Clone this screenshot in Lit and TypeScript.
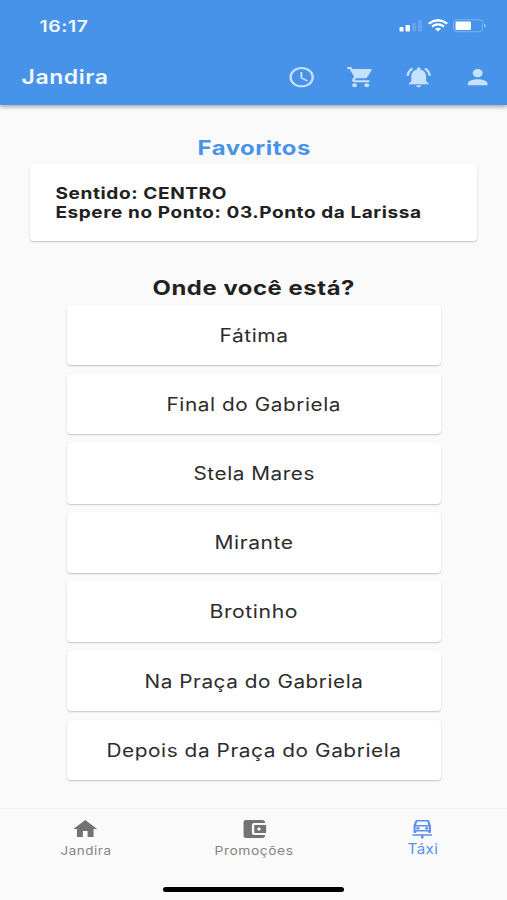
import { LitElement, html, css, svg } from "lit";
import { customElement, property } from "lit/decorators.js";

/** One line of text, set to a given advance width. */
@customElement("wide-text")
class WideText extends LitElement {
  @property() text = "";
  @property({ type: Number }) width = 100;
  @property({ type: Number }) size = 16;
  @property({ type: Number }) weight = 400;

  static styles = css`
    :host { display: block; flex: none; }
    .line { display: block; overflow: visible; font-family: Inter, "Liberation Sans", sans-serif; letter-spacing: 0.03em; fill: currentColor; }
  `;

  render() {
    return html`<svg class="line" width=${this.width} height="20">
      <text x="0.5" y="15" font-size=${this.size} font-weight=${this.weight}
        textLength=${this.width} lengthAdjust="spacingAndGlyphs">${this.text}</text>
    </svg>`;
  }
}

const icons: Record<string, unknown> = {
  clock: svg`<path d="M11.99 2C6.47 2 2 6.48 2 12s4.47 10 9.99 10C17.52 22 22 17.52 22 12S17.52 2 11.99 2zM12 20c-4.42 0-8-3.58-8-8s3.58-8 8-8 8 3.58 8 8-3.58 8-8 8zm.5-13H11v6l5.25 3.15.75-1.23-4.5-2.67z"/>`,
  cart: svg`<path d="M7 18c-1.1 0-1.99.9-1.99 2S5.9 22 7 22s2-.9 2-2-.9-2-2-2zM1 2v2h2l3.6 7.59-1.35 2.45c-.16.28-.25.61-.25.96 0 1.1.9 2 2 2h12v-2H7.42c-.14 0-.25-.11-.25-.25l.03-.12.9-1.63h7.45c.75 0 1.41-.41 1.75-1.03l3.58-6.49c.08-.14.12-.31.12-.48 0-.55-.45-1-1-1H5.21l-.94-2H1zm16 16c-1.1 0-1.99.9-1.99 2s.89 2 1.99 2 2-.9 2-2-.9-2-2-2z"/>`,
  bell: svg`<path d="M7.58 4.08L6.15 2.65C3.75 4.48 2.17 7.3 2.03 10.5h2c.15-2.65 1.51-4.97 3.55-6.42zm12.39 6.42h2c-.15-3.2-1.73-6.02-4.12-7.85l-1.42 1.43c2.02 1.45 3.39 3.77 3.54 6.42zM18 11c0-3.07-1.64-5.64-4.5-6.32V4c0-.83-.67-1.5-1.5-1.5s-1.5.67-1.5 1.5v.68C7.63 5.36 6 7.92 6 11v5l-2 2v1h16v-1l-2-2v-5zm-6 11c.14 0 .27-.01.4-.04.65-.14 1.18-.58 1.44-1.18.1-.24.15-.5.15-.78h-4c.01 1.1.9 2 2.01 2z"/>`,
  person: svg`<path d="M12 12c2.21 0 4-1.79 4-4s-1.79-4-4-4-4 1.79-4 4 1.79 4 4 4zm0 2c-2.67 0-8 1.34-8 4v2h16v-2c0-2.66-5.33-4-8-4z"/>`,
  home: svg`<path d="M10 20v-6h4v6h5v-8h3L12 3 2 12h3v8z"/>`,
  wallet: svg`<path d="M21 18v1c0 1.1-.9 2-2 2H5c-1.11 0-2-.9-2-2V5c0-1.1.89-2 2-2h14c1.1 0 2 .9 2 2v1h-9c-1.11 0-2 .9-2 2v8c0 1.1.89 2 2 2h9zm-9-2h10V8H12v8zm4-2.500c-.83 0-1.500-.67-1.500-1.500s.67-1.500 1.500-1.500 1.500.67 1.500 1.500-.67 1.500-1.500 1.500z"/>`,
  taxi: svg`<path fill-rule="evenodd" d="M17.900 4C17.700 3.300 17.200 2.900 16.500 2.900H7.500C6.800 2.900 6.300 3.300 6.100 4L4.700 8.600V15.200C4.700 15.700 5 16 5.500 16H6.200C6.700 16 7 15.700 7 15.200V14.600H17V15.200C17 15.700 17.300 16 17.800 16H18.500C19 16 19.300 15.700 19.300 15.200V8.600ZM7.700 4.500H16.300L17.200 7.900H6.800ZM6.400 9.400H17.600V13H6.400Z"/><circle cx="8.300" cy="11.200" r="1.300"/><circle cx="15.700" cy="11.200" r="1.300"/><path d="M3.800 17.200H20.200V18.800H13V21.500H11V18.800H3.800Z"/>`,
};

/** Glyph from the icon set, drawn on a 24-unit grid. */
@customElement("app-icon")
class AppIcon extends LitElement {
  @property() name = "";
  static styles = css`
    :host { display: block; flex: none; width: 29.4px; height: 24.4px; }
    .glyph { display: block; width: 100%; height: 100%; fill: currentColor; }
  `;
  render() {
    return html`<svg class="glyph" viewBox="0 0 24 24" preserveAspectRatio="none">${icons[this.name]}</svg>`;
  }
}

@customElement("app-root")
class AppRoot extends LitElement {
  static styles = css`
    :host { display: flex; flex-direction: column; box-sizing: border-box; width: 507px; height: 900px; overflow: hidden; background: #fafafa; color: #212121; }
    .header { flex: none; height: 105px; background: #4893ea; color: #fff; box-shadow: 0 2px 4px rgba(0,0,0,.34); z-index: 1; }
    .status { height: 49px; box-sizing: border-box; padding: 17px 20px 0 39px; display: flex; align-items: flex-start; justify-content: space-between; color: #f1f8ff; }
    .signals { display: block; width: 88px; height: 16px; padding-top: 1px; }
    .bar { height: 56px; display: flex; align-items: center; padding: 0 14.500px 0 20.500px; box-sizing: border-box; }
    .title { flex: 1; padding-top: 4px; color: #f1f8ff; }
    .actions { display: flex; gap: 29.400px; color: #c6e1fa; }
    .content { flex: 1; display: flex; flex-direction: column; align-items: center; padding-top: 34.500px; }
    .heading { color: #4893ea; }
    .card { background: #fff; border-radius: 4px; box-shadow: 0 1px 2px rgba(0,0,0,.2), 0 1px 1px rgba(0,0,0,.03); box-sizing: border-box; }
    .favorite { width: 447.500px; height: 77px; margin: 4.500px 0 38.700px; padding: 19.500px 25px; }
    .favorite wide-text { height: 19.300px; }
    .places { display: grid; grid-auto-rows: 60.500px; gap: 8.700px; width: 374px; margin-top: 5px; }
    .place { display: flex; align-items: center; justify-content: center; padding-top: 3.500px; color: #2c2c2c; }
    .nav { flex: none; height: 92px; box-sizing: border-box; border-top: 1px solid #eeeeee; display: flex; flex-direction: column; align-items: center; justify-content: space-between; padding-bottom: 8px; }
    .tabs { display: grid; grid-template-columns: repeat(3, 1fr); width: 100%; padding: 8px 0 0 1px; box-sizing: border-box; }
    .tab { display: flex; flex-direction: column; align-items: center; color: #737373; }
    .tab app-icon { height: 24px; width: 28.500px; }
    .tab wide-text { color: #858585; margin-top: -1px; }
    .tab.active, .tab.active wide-text { color: #5b8df0; }
    .tab.active wide-text { margin-top: -2px; }
    .indicator { width: 181px; height: 5px; border-radius: 3px; background: #000; }
  `;

  private places: [string, number][] = [
    ["Fátima", 69], ["Final do Gabriela", 174.5], ["Stela Mares", 121.5], ["Mirante", 79],
    ["Brotinho", 88.5], ["Na Praça do Gabriela", 219], ["Depois da Praça do Gabriela", 295],
  ];

  private tabs = [
    { icon: "home", text: "Jandira", width: 51, size: 12, active: false },
    { icon: "wallet", text: "Promoções", width: 79, size: 12, active: false },
    { icon: "taxi", text: "Táxi", width: 31, size: 14, active: true },
  ];

  render() {
    return html`
      <header class="header">
        <div class="status">
          <wide-text text="16:17" .width=${49} .size=${16} .weight=${600}></wide-text>
          <svg class="signals" viewBox="0 0 88 16">
            <g fill="#fff">
              <rect x="0.500" y="9" width="4" height="4.500" rx="1"/>
              <rect x="6.500" y="7" width="4.500" height="6.500" rx="1"/>
              <rect x="13" y="4.500" width="4" height="9" rx="1" opacity=".16"/>
              <rect x="19" y="2" width="4" height="11.500" rx="1" opacity=".16"/>
              <rect x="56.500" y="3.500" width="15.500" height="8.500" rx="1.200"/>
            </g>
            <g fill="none" stroke="#fff">
              <path d="M29.700 5.600Q39 -1.200 48.300 5.600" stroke-width="2.400"/>
              <path d="M33 8.600Q39 4.300 45 8.600" stroke-width="2.300"/>
              <rect x="54.500" y="1.700" width="29" height="12" rx="3.500" opacity=".28"/>
            </g>
            <path d="M36 10.800Q39 8.900 42 10.800L39 13.500Z" fill="#fff"/>
            <path d="M85 5.500Q89 7.700 85 9.900Z" fill="#fff" opacity=".4"/>
          </svg>
        </div>
        <div class="bar">
          <div class="title"><wide-text text="Jandira" .width=${87} .size=${20} .weight=${570}></wide-text></div>
          <div class="actions">
            ${["clock", "cart", "bell", "person"].map((n) => html`<app-icon name=${n}></app-icon>`)}
          </div>
        </div>
      </header>
      <main class="content">
        <wide-text class="heading" text="Favoritos" .width=${113.5} .size=${20} .weight=${650}></wide-text>
        <section class="card favorite">
          <wide-text text="Sentido: CENTRO" .width=${171.5} .size=${16} .weight=${650}></wide-text>
          <wide-text text="Espere no Ponto: 03.Ponto da Larissa" .width=${366} .size=${16} .weight=${650}></wide-text>
        </section>
        <wide-text text="Onde você está?" .width=${202.5} .size=${20} .weight=${650}></wide-text>
        <section class="places">
          ${this.places.map(([name, width]) => html`<div class="card place">
            <wide-text .text=${name} .width=${width} .size=${18} .weight=${400}></wide-text>
          </div>`)}
        </section>
      </main>
      <nav class="nav">
        <div class="tabs">
          ${this.tabs.map((t) => html`<div class="tab ${t.active ? "active" : ""}">
            <app-icon name=${t.icon}></app-icon>
            <wide-text .text=${t.text} .width=${t.width} .size=${t.size}></wide-text>
          </div>`)}
        </div>
        <div class="indicator"></div>
      </nav>
    `;
  }
}
